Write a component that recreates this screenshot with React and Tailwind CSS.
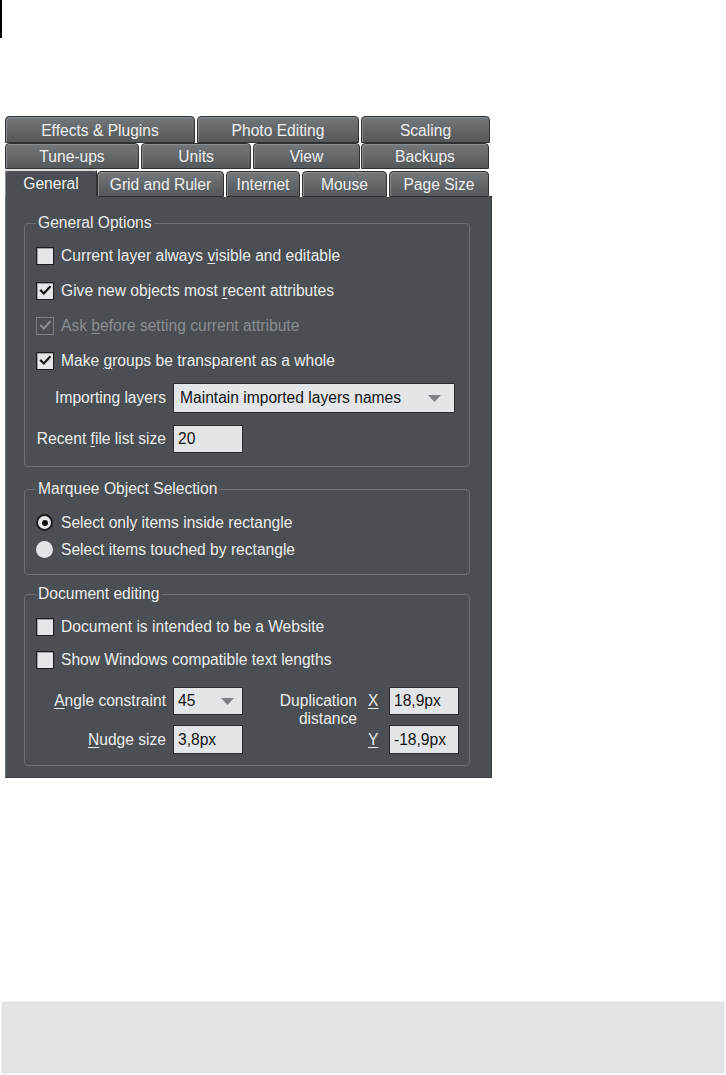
import React from "react";

const tabBase =
  "flex items-center justify-center rounded-t-[4px] border border-[#2e3032] bg-linear-to-b from-[#75787b] to-[#55585b] shadow-[inset_1px_1px_0_#8a8d90] text-[#eeeeee] leading-none pt-[2px]";

function Tab({ className, children }) {
  return <div className={`${tabBase} ${className}`}>{children}</div>;
}

function CheckMark({ color }) {
  return (
    <svg viewBox="0 0 16 16" className="w-[13px] h-[13px]">
      <path d="M2.5 8.2 L6 11.6 L13.2 3.8" fill="none" stroke={color} strokeWidth="2.7" strokeLinecap="square" />
    </svg>
  );
}

function CheckRow({ checked, disabled, children }) {
  return (
    <div className="flex items-center h-[35px]">
      <span
        className={
          disabled
            ? "w-[18px] h-[18px] border border-[#7b7e82] flex items-center justify-center"
            : "w-[18px] h-[18px] border border-[#1c1d1f] bg-[#e4e6e9] shadow-[inset_1px_1px_0_#9ea0a3] flex items-center justify-center"
        }
      >
        {checked && <CheckMark color={disabled ? "#8a8d90" : "#151515"} />}
      </span>
      <span className={disabled ? "ml-[7px] text-[#8a8d91]" : "ml-[7px]"}>{children}</span>
    </div>
  );
}

function U({ children }) {
  return <span className="underline decoration-1 underline-offset-[2px]">{children}</span>;
}

function Arrow() {
  return (
    <svg width="13" height="7" viewBox="0 0 13 7">
      <path d="M0 0 H13 L6.5 7 Z" fill="#7c7f83" />
    </svg>
  );
}

const field =
  "bg-[#e3e5e8] border border-[#2b2c2e] text-[#151515] flex items-center";

function Legend({ children }) {
  return <legend className="px-[2px] leading-[18px]">{children}</legend>;
}

export default function App() {
  return (
    <div className="w-[726px] h-[1075px] bg-white font-['Liberation_Sans',Arial,sans-serif] text-[15.6px] text-[#ececec]">
      <div className="w-[2px] h-[38px] bg-black" />

      <div className="mt-[78px] ml-[5px] w-[487px]">
        {/* tab rows */}
        <div className="flex h-[27px]">
          <Tab className="w-[190px]">Effects &amp; Plugins</Tab>
          <Tab className="ml-[2px] w-[162px]">Photo Editing</Tab>
          <Tab className="ml-[2px] w-[129px]">Scaling</Tab>
        </div>
        <div className="flex h-[26px]">
          <Tab className="w-[134px]">Tune-ups</Tab>
          <Tab className="ml-[2px] w-[110px]">Units</Tab>
          <Tab className="ml-[2px] w-[107px]">View</Tab>
          <Tab className="ml-[1px] w-[128px]">Backups</Tab>
        </div>
        <div className="flex h-[28px] items-end">
          <div className="h-[28px] w-[92px] bg-[#4b4e52] border-t-2 border-t-[#dcdcdc] border-l border-l-[#8a8d90] border-r border-r-[#2e3032] rounded-t-[3px] flex items-center justify-center leading-none text-[#eeeeee]">
            General
          </div>
          <Tab className="h-[26px] w-[127px]">Grid and Ruler</Tab>
          <Tab className="h-[26px] ml-[2px] w-[74px]">Internet</Tab>
          <Tab className="h-[26px] ml-[2px] w-[85px]">Mouse</Tab>
          <Tab className="h-[26px] ml-[2px] w-[100px]">Page Size</Tab>
          <div className="flex-1 h-[1px] bg-[#2e3032]" />
        </div>

        {/* body */}
        <div className="bg-[#4b4e52] border-l border-l-[#686b6f] border-r border-r-[#3a3c3f] border-b border-b-[#3a3c3f] pl-[18px] pr-[21px] pt-[17px] pb-[11px]">
          <fieldset className="border border-[#6c6f73] rounded-[4px] pl-[11px] pr-[13px] pb-[13px]">
            <Legend>General Options</Legend>
            <div className="pt-[6px]">
              <CheckRow>
                Current layer always <U>v</U>isible and editable
              </CheckRow>
              <CheckRow checked>
                Give new objects most <U>r</U>ecent attributes
              </CheckRow>
              <CheckRow checked disabled>
                Ask <U>b</U>efore setting current attribute
              </CheckRow>
              <CheckRow checked>
                Make <U>g</U>roups be transparent as a whole
              </CheckRow>
              <div className="mt-[5px] h-[30px] flex items-center">
                <span className="w-[130px] text-right">Importing layers</span>
                <div className={`${field} ml-[7px] w-[282px] h-[30px] pl-[6px] pr-[13px] justify-between`}>
                  <span>Maintain imported layers names</span>
                  <Arrow />
                </div>
              </div>
              <div className="mt-[12px] h-[28px] flex items-center">
                <span className="w-[130px] text-right">
                  Recent <U>f</U>ile list size
                </span>
                <div className={`${field} ml-[7px] w-[70px] h-[28px] pl-[4px]`}>20</div>
              </div>
            </div>
          </fieldset>

          <fieldset className="mt-[13px] border border-[#6c6f73] rounded-[4px] pl-[11px] pr-[13px] pb-[11px]">
            <Legend>Marquee Object Selection</Legend>
            <div className="pt-[11px]">
              <div className="flex items-center h-[27px]">
                <span className="w-[17px] h-[17px] rounded-full bg-[#e6e7ea] border-2 border-[#1d1e20] flex items-center justify-center">
                  <span className="w-[6px] h-[6px] rounded-full bg-[#111111]" />
                </span>
                <span className="ml-[8px]">Select only items inside rectangle</span>
              </div>
              <div className="flex items-center h-[27px]">
                <span className="w-[17px] h-[17px] rounded-full bg-[#e4e5e8]" />
                <span className="ml-[8px]">Select items touched by rectangle</span>
              </div>
            </div>
          </fieldset>

          <fieldset className="mt-[10px] border border-[#6c6f73] rounded-[4px] pl-[11px] pr-[10px] pb-[11px]">
            <Legend>Document editing</Legend>
            <div className="pt-[7px]">
              <div className="[&>div]:h-[33px]">
                <CheckRow>Document is intended to be a Website</CheckRow>
                <CheckRow>Show Windows compatible text lengths</CheckRow>
              </div>
              <div className="mt-[11px] flex">
                <div className="w-[207px] shrink-0">
                  <div className="h-[28px] flex items-center">
                    <span className="w-[130px] text-right">
                      <U>A</U>ngle constraint
                    </span>
                    <div className={`${field} ml-[7px] w-[70px] h-[28px] pl-[4px] pr-[8px] justify-between`}>
                      <span>45</span>
                      <Arrow />
                    </div>
                  </div>
                  <div className="mt-[10px] h-[29px] flex items-center">
                    <span className="w-[130px] text-right">
                      <U>N</U>udge size
                    </span>
                    <div className={`${field} ml-[7px] w-[70px] h-[29px] pl-[4px]`}>3,8px</div>
                  </div>
                </div>
                <div className="ml-[24px] w-[90px] shrink-0 pt-[5px] text-right leading-[18px]">
                  Duplication
                  <br />
                  distance
                </div>
                <div className="ml-[11px]">
                  <div className="h-[28px] flex items-center">
                    <span className="w-[12px]">
                      <U>X</U>
                    </span>
                    <div className={`${field} ml-[9px] w-[70px] h-[28px] pl-[4px]`}>18,9px</div>
                  </div>
                  <div className="mt-[10px] h-[29px] flex items-center">
                    <span className="w-[12px]">
                      <U>Y</U>
                    </span>
                    <div className={`${field} ml-[9px] w-[70px] h-[29px] pl-[4px]`}>-18,9px</div>
                  </div>
                </div>
              </div>
            </div>
          </fieldset>
        </div>
      </div>

      <div className="mt-[223px] ml-[1px] w-[724px] h-[73px] bg-[#e4e4e4] border border-[#efefef]" />
    </div>
  );
}
